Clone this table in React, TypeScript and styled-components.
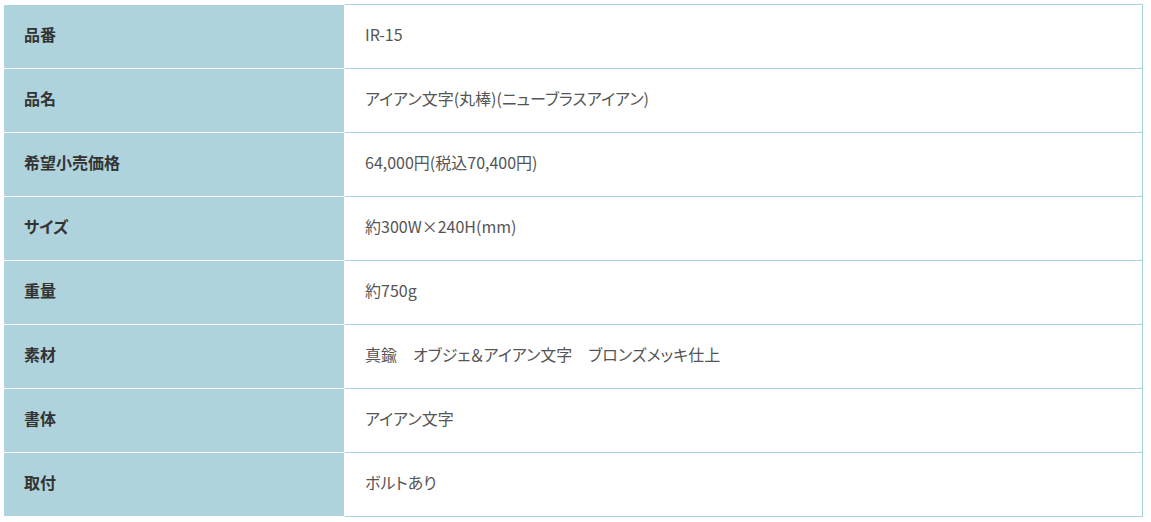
import React from "react";
import styled, { createGlobalStyle } from "styled-components";

const GlobalStyle = createGlobalStyle`
  body {
    margin: 0;
    background: #fff;
    font-family: "Noto Sans CJK JP", "Noto Sans", sans-serif;
  }
`;

const Wrap = styled.div`
  padding: 4px 0 0 3px;
`;

const SpecTable = styled.table`
  width: 1140px;
  border-collapse: collapse;
  font-size: 16px;
  line-height: 1.5;
  font-feature-settings: "palt";
`;

const Row = styled.tr`
  height: 64px;
`;

const Head = styled.th`
  width: 300px;
  padding: 0 20px 6px;
  background: #afd3dc;
  border: 1px solid #fff;
  color: #333;
  font-weight: 700;
  text-align: left;
  vertical-align: middle;
`;

const Cell = styled.td`
  padding: 0 20px 6px;
  border: 1px solid #a8d3dc;
  color: #555;
  font-weight: 400;
  vertical-align: middle;
`;

const specs: [string, string][] = [
  ["品番", "IR-15"],
  ["品名", "アイアン文字(丸棒)(ニューブラスアイアン)"],
  ["希望小売価格", "64,000円(税込70,400円)"],
  ["サイズ", "約300W×240H(mm)"],
  ["重量", "約750g"],
  ["素材", "真鍮　オブジェ＆アイアン文字　ブロンズメッキ仕上"],
  ["書体", "アイアン文字"],
  ["取付", "ボルトあり"],
];

export default function App() {
  return (
    <>
      <GlobalStyle />
      <Wrap>
        <SpecTable>
          <tbody>
            {specs.map(([label, value]) => (
              <Row key={label}>
                <Head>{label}</Head>
                <Cell>{value}</Cell>
              </Row>
            ))}
          </tbody>
        </SpecTable>
      </Wrap>
    </>
  );
}
